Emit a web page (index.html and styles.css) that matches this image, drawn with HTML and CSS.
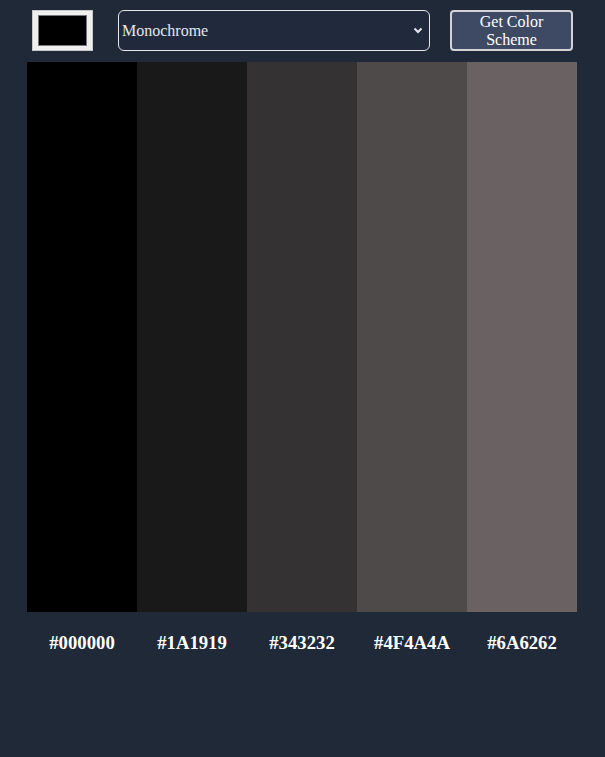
FILE: index.html
```html
<!DOCTYPE html>
<html>
<head>
<meta charset="utf-8">
<link rel="stylesheet" href="styles.css">
</head>
<body>
<div class="app">
  <div class="controls">
    <div class="color-pick"><div class="swatch"></div></div>
    <div class="select">
      <span class="select-text">Monochrome</span>
      <svg class="chev" width="10" height="7" viewBox="0 0 10 7"><path d="M1.5 1.5 L5 5 L8.5 1.5" fill="none" stroke="#e5e7eb" stroke-width="2"/></svg>
    </div>
    <div class="btn">Get Color<br>Scheme</div>
  </div>
  <div class="scheme">
    <div class="col" style="background:#000000"></div>
    <div class="col" style="background:#1A1919"></div>
    <div class="col" style="background:#343232"></div>
    <div class="col" style="background:#4F4A4A"></div>
    <div class="col" style="background:#6A6262"></div>
  </div>
  <div class="labels">
    <h3 class="label">#000000</h3>
    <h3 class="label">#1A1919</h3>
    <h3 class="label">#343232</h3>
    <h3 class="label">#4F4A4A</h3>
    <h3 class="label">#6A6262</h3>
  </div>
</div>
</body>
</html>
```
FILE: styles.css
```css
html, body {
  margin: 0;
  padding: 0;
  background: #1f2937;
  font-family: "Liberation Serif", "Times New Roman", serif;
  color: #fff;
  height: 100%;
}
.app {
  width: 550px;
  margin: 0 0 0 27px;
}
.controls {
  display: flex;
  align-items: center;
  padding-top: 9px;
  height: 43px;
  margin-bottom: 10px;
}
.color-pick {
  box-sizing: border-box;
  width: 61px;
  height: 41px;
  margin-left: 5px;
  background: #efefef;
  border: 1px solid #c8c8c8;
  padding: 4px 5px;
  display: flex;
}
.swatch {
  flex: 1;
  background: #000;
  border: 1px solid #777;
}
.select {
  box-sizing: border-box;
  margin-left: 25px;
  width: 312px;
  height: 41px;
  border: 1px solid #e5e7eb;
  border-radius: 6px;
  background: #212a3c;
  display: flex;
  align-items: center;
  padding: 0 4px 0 3px;
  font-size: 16px;
  color: #e5e7eb;
}
.select-text { flex: 1; }
.chev { margin-right: 2px; }
.btn {
  box-sizing: border-box;
  margin-left: 20px;
  width: 123px;
  height: 41px;
  border: 2px solid #d4d4d8;
  border-radius: 4px;
  background: #3e4a63;
  color: #fff;
  font-size: 16px;
  line-height: 18px;
  text-align: center;
  display: flex;
  align-items: center;
  justify-content: center;
}
.scheme {
  display: flex;
  height: 550px;
}
.col { flex: 1; }
.labels {
  display: flex;
}
.label {
  flex: 1;
  text-align: center;
  font-size: 18.72px;
  font-weight: bold;
  margin: 19.5px 0;
}
```
